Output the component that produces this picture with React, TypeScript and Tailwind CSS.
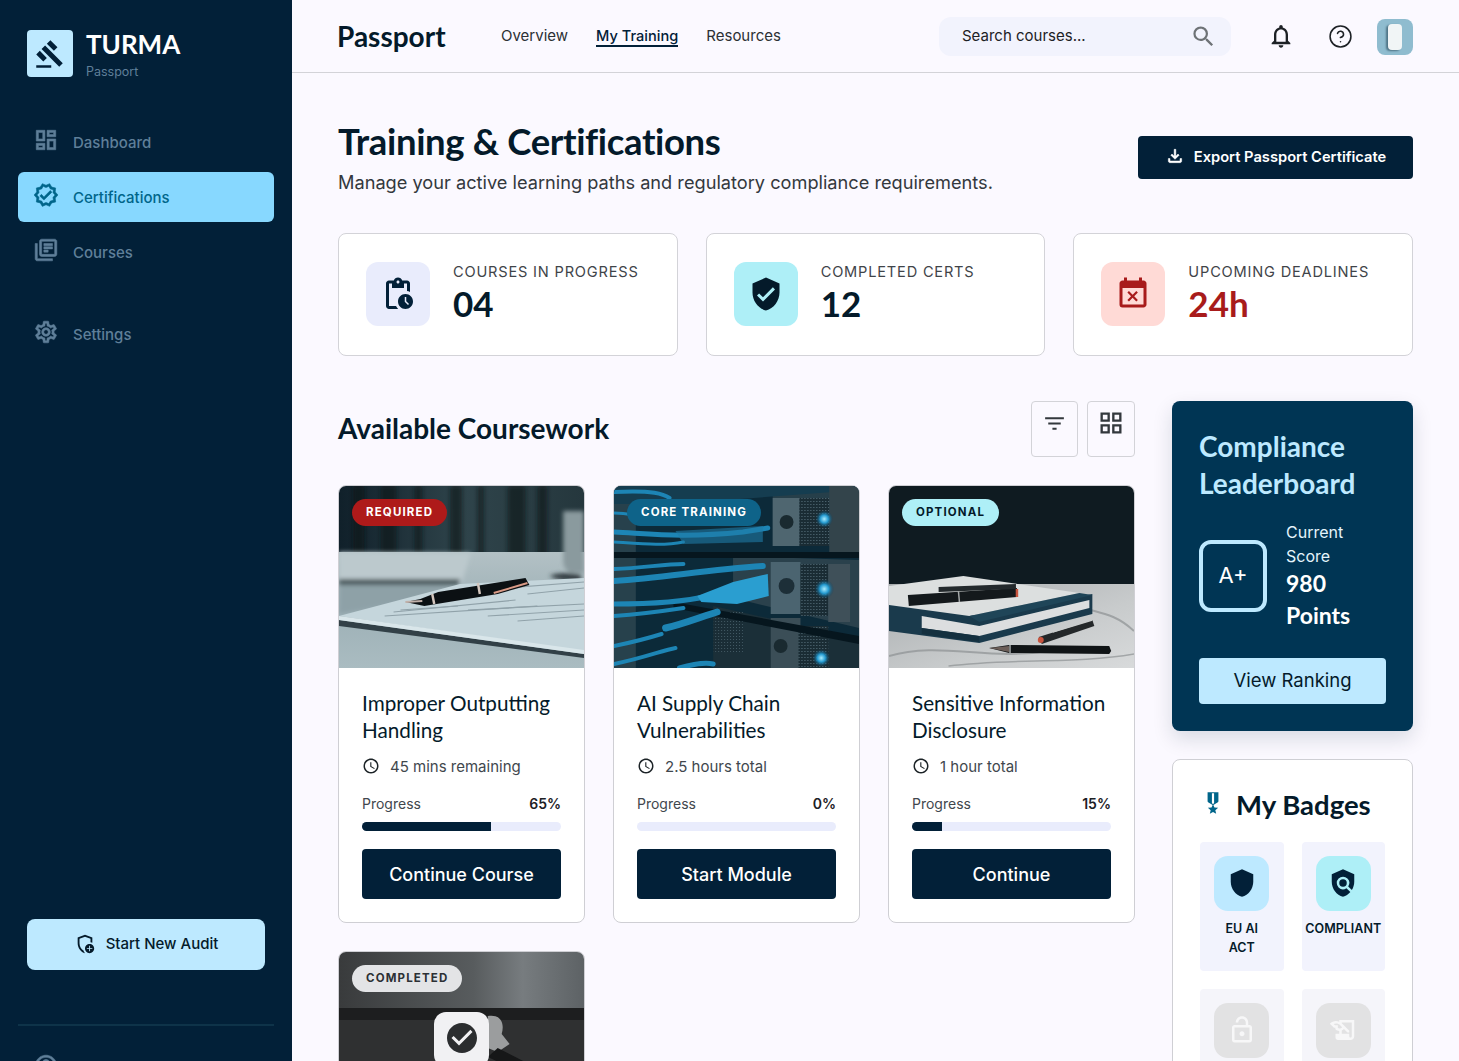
import {
  MdCheckCircle,
  MdEventBusy,
  MdFilterList,
  MdGavel,
  MdMilitaryTech,
  MdOutlineAddModerator,
  MdOutlineDashboard,
  MdOutlineFileDownload,
  MdOutlineGridView,
  MdOutlineHelpOutline,
  MdOutlineHistoryEdu,
  MdOutlineLibraryBooks,
  MdOutlineLockOpen,
  MdOutlineNotifications,
  MdOutlineSchedule,
  MdOutlineSettings,
  MdOutlineVerified,
  MdPendingActions,
  MdPolicy,
  MdSearch,
  MdShield,
  MdVerifiedUser,
} from "react-icons/md"
import { CircleHelp } from "lucide-react"
import type { ReactNode } from "react"

const heading = "font-['Lato',sans-serif]"

function PenPhoto() {
  return (
    <svg viewBox="0 0 247 182" preserveAspectRatio="none" className="block h-full w-full">
      <defs>
        <linearGradient id="deskTop" x1="0" x2="1" y1="0" y2="0">
          <stop offset="0" stopColor="#10202a" />
          <stop offset="0.5" stopColor="#2f444b" />
          <stop offset="1" stopColor="#25373d" />
        </linearGradient>
        <linearGradient id="deskBottom" x1="0" x2="0" y1="0" y2="1">
          <stop offset="0" stopColor="#b3c1c5" />
          <stop offset="0.5" stopColor="#9db0b6" />
          <stop offset="1" stopColor="#aabcc1" />
        </linearGradient>
        <filter id="soft1"><feGaussianBlur stdDeviation="2" /></filter>
      </defs>
      <rect width="247" height="70" fill="url(#deskTop)" />
      <g filter="url(#soft1)" fill="#071319" opacity="0.6">
        <rect x="14" width="12" height="70" />
        <rect x="42" width="16" height="70" />
        <rect x="76" width="8" height="70" />
        <rect x="112" width="12" height="70" />
        <rect x="140" width="6" height="70" />
        <rect x="170" width="18" height="70" />
        <rect x="200" width="10" height="70" />
      </g>
      <rect y="66" width="247" height="116" fill="url(#deskBottom)" />
      <g filter="url(#soft1)">
        <path d="M226 25 h21 v62 h-14 q-7 -4 -7 -12z" fill="#8a9a9e" />
        <path d="M0 66 L133 67 L124 96 L0 96z" fill="#bcc9cd" />
        <path d="M0 93 L122 93 L120 99 L0 99z" fill="#4a585c" />
        <path d="M0 99 L120 99 L60 118 L0 128Z" fill="#8ea1a7" />
        <path d="M212 90 q12 -5 32 -1 v5 q-20 2 -32 -4z" fill="#2e393c" />
      </g>
      <path d="M0 130 L122 98 L247 92 L247 165 Z" fill="#c5d6dc" />
      <path d="M0 134 L247 168 L247 172 L0 140 Z" fill="#324047" />
      <path d="M0 130 L247 164 L247 168 L0 134 Z" fill="#d9e6ea" />
      <g stroke="#7f9199" strokeWidth="1.2" opacity="0.75">
        <path d="M55 126 L178 114" />
        <path d="M46 130 L200 120" />
        <path d="M62 124 L120 120" />
        <path d="M130 124 L247 118" />
        <path d="M150 130 L247 124" />
        <path d="M180 135 L247 130" />
        <path d="M190 108 L247 102" />
        <path d="M170 102 L247 96" />
      </g>
      <path d="M67 116 L82 113 L100 106 L188 92 L192 99 L160 108 L86 120 Z" fill="#0b1013" />
      <path d="M140 97 L142 108 M94 108 L96 118" stroke="#d3c5bd" strokeWidth="2.5" />
      <path d="M156 107 L190 97" stroke="#d99a86" strokeWidth="2" />
      <path d="M67 116 L84 115" stroke="#c1b1aa" strokeWidth="2" />
    </svg>
  )
}

function ServerPhoto() {
  return (
    <svg viewBox="0 0 247 182" preserveAspectRatio="none" className="block h-full w-full">
      <defs>
        <radialGradient id="led">
          <stop offset="0" stopColor="#a8ecff" />
          <stop offset="0.45" stopColor="#249ad0" />
          <stop offset="1" stopColor="#0a3b55" stopOpacity="0" />
        </radialGradient>
        <pattern id="mesh" width="3" height="3" patternUnits="userSpaceOnUse">
          <rect width="3" height="3" fill="#1a2c34" />
          <rect width="1" height="1" fill="#5c7581" />
        </pattern>
      </defs>
      <rect width="247" height="182" fill="#0c2a39" />
      <rect width="22" height="182" fill="#27414c" />
      <path d="M160 0 L247 0 L247 60 L160 60Z" fill="#263f4a" />
      <path d="M120 70 L247 74 L247 142 L120 112Z" fill="#2a414c" />
      <path d="M100 120 L247 152 L247 182 L100 182Z" fill="#1b2f38" />
      <path d="M0 0 H247 V4 L60 18 H0Z" fill="#153d50" />
      <rect x="160" y="12" width="27" height="48" fill="#4f6670" />
      <rect x="187" y="12" width="30" height="48" fill="url(#mesh)" />
      <rect x="217" y="0" width="30" height="66" fill="#33444b" />
      <rect x="158" y="76" width="30" height="52" fill="#4b6470" />
      <rect x="188" y="78" width="28" height="52" fill="url(#mesh)" />
      <rect x="216" y="78" width="22" height="58" fill="#3f5059" />
      <rect x="158" y="132" width="30" height="50" fill="#3b4e57" />
      <rect x="186" y="140" width="30" height="42" fill="url(#mesh)" />
      <rect x="100" y="126" width="30" height="40" fill="url(#mesh)" opacity="0.6" />
      <path d="M0 66 H247 V72 H0Z M60 116 L247 150 V158 L60 122Z" fill="#06161e" />
      <circle cx="174" cy="36" r="7" fill="#1a2a30" />
      <circle cx="174" cy="100" r="8" fill="#1d2f38" />
      <circle cx="168" cy="160" r="7" fill="#1a2a30" />
      <g fill="none" stroke="#1d85b5" strokeLinecap="round">
        <path d="M0 6 C40 4 50 8 56 12" strokeWidth="4" />
        <path d="M0 27 C15 27 25 30 40 34" strokeWidth="3" />
        <path d="M0 46 C40 48 70 52 130 46 L155 42" strokeWidth="5" />
        <path d="M0 83 C30 82 50 78 70 78" strokeWidth="4" />
        <path d="M0 95 C50 92 90 84 150 80" strokeWidth="6" />
        <path d="M0 118 C40 118 70 116 95 110 L145 100" strokeWidth="5" />
        <path d="M0 130 C30 128 50 125 70 122" strokeWidth="4" />
        <path d="M52 142 C70 138 90 130 104 126" strokeWidth="7" />
        <path d="M0 160 C20 156 35 152 48 148" strokeWidth="4" />
        <path d="M0 178 C30 172 50 164 62 162" strokeWidth="4" />
        <path d="M66 182 C80 178 90 176 100 178" strokeWidth="5" />
        <path d="M0 56 C30 58 50 60 70 56" strokeWidth="3" />
      </g>
      <path d="M84 110 L120 96 L155 88 L156 110 L124 118 L88 116Z" fill="#2a9ed0" />
      <path d="M62 45 L150 40 V56 L70 58Z" fill="#1f7ca6" opacity="0.6" />
      <circle cx="212" cy="33" r="9" fill="url(#led)" />
      <circle cx="212" cy="103" r="10" fill="url(#led)" />
      <circle cx="209" cy="172" r="9" fill="url(#led)" />
    </svg>
  )
}

function NotebookPhoto() {
  return (
    <svg viewBox="0 0 247 182" preserveAspectRatio="none" className="block h-full w-full">
      <defs>
        <linearGradient id="marble" x1="0" x2="1" y1="0" y2="1">
          <stop offset="0" stopColor="#a9adaf" />
          <stop offset="0.6" stopColor="#c8cbcc" />
          <stop offset="1" stopColor="#d8dadb" />
        </linearGradient>
      </defs>
      <rect width="247" height="182" fill="#0f1b21" />
      <rect y="98" width="247" height="84" fill="url(#marble)" />
      <g stroke="#8e9294" fill="none" opacity="0.7">
        <path d="M0 170 C50 155 100 175 160 165" strokeWidth="2" />
        <path d="M170 110 C200 130 220 120 247 145" strokeWidth="2" />
        <path d="M60 180 C120 172 190 178 247 168" strokeWidth="1.5" />
      </g>
      <path d="M0 118 L0 145 L91 157 L205 128 L205 108 L91 130Z" fill="#1a3a4c" />
      <path d="M33 130 L91 140 L202 114 L202 122 L91 150 L33 142Z" fill="#dcdedf" />
      <path d="M33 142 L91 150 V156 L33 148Z" fill="#14303f" />
      <path d="M0 100 L75 90 L192 107 L81 130 L0 119 Z" fill="#dcdfdf" />
      <path d="M81 130 L192 107 L205 109 L91 136Z" fill="#1f4558" />
      <path d="M19 109 L129 102 L129 111 L20 120Z" fill="#14191c" />
      <path d="M50 101 L128 98 L128 103 L50 106Z" fill="#23292c" />
      <path d="M70 105 L71 116" stroke="#a5a9aa" strokeWidth="1.5" />
      <path d="M129 103 L129 111" stroke="#c9553f" strokeWidth="2.5" />
      <path d="M151 151 L205 134 L207 140 L154 158Z" fill="#24282a" />
      <path d="M165 146 L205 134" stroke="#c9cccc" strokeWidth="1.5" />
      <circle cx="153" cy="154" r="3" fill="#c9553f" />
      <path d="M101 162 L121 159 L222 160 L224 165 L222 168 L121 167Z" fill="#101416" />
      <path d="M101 162 L121 160 L121 166Z" fill="#6c5e58" />
      <path d="M122 159 V167" stroke="#a5a9aa" strokeWidth="1.5" />
    </svg>
  )
}

function GavelPhoto() {
  return (
    <svg viewBox="0 0 247 182" preserveAspectRatio="none" className="block h-full w-full">
      <defs>
        <linearGradient id="grayBack" x1="0" x2="1" y1="0" y2="0">
          <stop offset="0" stopColor="#393b3c" />
          <stop offset="0.55" stopColor="#585c5e" />
          <stop offset="0.75" stopColor="#777c7f" />
          <stop offset="1" stopColor="#5d6265" />
        </linearGradient>
      </defs>
      <rect width="247" height="182" fill="url(#grayBack)" />
      <rect y="58" width="247" height="124" fill="#2f3031" />
      <rect y="56" width="247" height="12" fill="#1d1e1f" />
      <path d="M150 64 C160 62 168 68 164 82 L172 92 L160 100 L150 96Z" fill="#9b9d9e" />
      <path d="M160 96 L247 140 V150 L150 105Z" fill="#161718" />
    </svg>
  )
}

function NavItem({ icon, label, active, className }: { icon: ReactNode; label: string; active?: boolean; className?: string }) {
  return (
    <div className={`flex h-[50px] items-center gap-[14px] rounded-md pl-[15px] text-[15px] font-medium ${active ? "bg-[#87d8ff] text-[#00658a]" : "text-[#5f7f99]"} ${className ?? ""}`}>
      <span className="-mt-1 text-[26px] [&_path:not([fill=none])]:[stroke-width:0.5]">{icon}</span>
      <span className="mt-[2px]">{label}</span>
    </div>
  )
}

function StatCard({ icon, iconBox, label, value, valueColor }: { icon: ReactNode; iconBox: string; label: string; value: string; valueColor: string }) {
  return (
    <div className="flex h-[123px] flex-1 items-center gap-[23px] rounded-lg border border-[#d3d3d8] bg-white pl-[27px]">
      <div className={`-mt-px flex h-[64px] w-[64px] items-center justify-center rounded-xl text-[36px] ${iconBox}`}>{icon}</div>
      <div className="-mt-[3px]">
        <div className="text-[14.6px] tracking-[0.055em] text-[#3f4449]">{label}</div>
        <div className={`${heading} -mt-[3px] text-[35px] leading-[44px] font-bold ${valueColor}`}>{value}</div>
      </div>
    </div>
  )
}

function CourseCard({ photo, tag, tagClass, title, time, pct, cta }: { photo: ReactNode; tag: string; tagClass: string; title: ReactNode; time: string; pct: number; cta: string }) {
  return (
    <div className="overflow-hidden rounded-lg border border-[#cfcfd4] bg-white">
      <div className="relative h-[182px]">
        {photo}
        <span className={`absolute top-[13px] left-[13px] flex h-[27px] items-center rounded-full px-[14px] text-[11.5px] font-bold tracking-[0.1em] ${tagClass}`}>{tag}</span>
      </div>
      <div className="h-[254px] px-[23px] pt-[22px]">
        <h3 className={`${heading} text-[20.7px] leading-[27px] text-[#041a2a]`}>{title}</h3>
        <div className="mt-[12px] flex items-center gap-[10px] text-[15px] text-[#41474d]">
          <MdOutlineSchedule className="-mt-1 text-[18px] text-[#1c2327]" />
          {time}
        </div>
        <div className="mt-[14px] flex justify-between text-[14px]">
          <span className="text-[#41474d]">Progress</span>
          <span className="font-semibold text-[#1d2125]">{pct}%</span>
        </div>
        <div className="mt-[8px] h-[9px] overflow-hidden rounded-full bg-[#e9ecfc]">
          <div className="h-full bg-[#022038]" style={{ width: `${pct}%` }} />
        </div>
        <button className="mt-[18px] h-[50px] w-full rounded bg-[#022038] pt-px text-[18px] font-medium text-white">{cta}</button>
      </div>
    </div>
  )
}

function BadgeTile({ icon, label, locked }: { icon: ReactNode; label?: ReactNode; locked?: boolean }) {
  return (
    <div className={`flex h-[129px] flex-col items-center rounded pt-[14px] ${locked ? "bg-[#f5f5fa]" : "bg-[#f2f3fd]"}`}>
      {icon}
      {label && <div className="mt-[8px] text-center text-[12.5px] leading-[19px] font-semibold text-[#041a2a]">{label}</div>}
    </div>
  )
}

export default function App() {
  return (
    <div className="flex h-screen overflow-hidden bg-[#fbf9ff] font-['Inter',sans-serif] text-[#041a2a]">
      <aside className="h-full w-[292px] shrink-0 overflow-hidden bg-[#022038] px-[18px] pt-[30px]">
        <div className="flex items-start gap-[13px] pl-[9px]">
          <div className="flex h-[47px] w-[46px] items-center justify-center rounded-sm bg-[#bde9ff] text-[30px] text-[#022038]">
            <MdGavel />
          </div>
          <div>
            <div className={`${heading} -mt-1 text-[26px] leading-[36px] font-bold text-white`}>TURMA</div>
            <div className="mt-px text-[12.5px] text-[#5f7f99]">Passport</div>
          </div>
        </div>
        <nav className="mt-[35px] flex flex-col gap-[5px]">
          <NavItem icon={<MdOutlineDashboard />} label="Dashboard" />
          <NavItem icon={<MdOutlineVerified />} label="Certifications" active />
          <NavItem icon={<MdOutlineLibraryBooks />} label="Courses" />
          <NavItem icon={<MdOutlineSettings />} label="Settings" className="mt-[27px]" />
        </nav>
        <button className="mx-[9px] mt-[560px] flex h-[51px] w-[238px] items-center justify-center gap-[10px] rounded-lg bg-[#bde9ff] text-[15px] font-medium text-[#041a2a]">
          <MdOutlineAddModerator className="text-[22px]" />
          Start New Audit
        </button>
        <div className="mt-[54px] border-t-2 border-[#0e3349] pt-[17px]">
          <NavItem icon={<MdOutlineHelpOutline />} label="Help Center" className="h-[30px]" />
        </div>
      </aside>

      <div className="min-w-0 flex-1 overflow-hidden">
        <header className="flex h-[73px] items-center border-b border-[#d3d3d8] px-[46px]">
          <div className={`${heading} -ml-px w-[164px] text-[28px] font-bold text-[#041a2a]`}>Passport</div>
          <nav className="mt-[2px] flex items-center gap-[28px] text-[15px] leading-[18px] text-[#2c3034]">
            <span className="border-b-2 border-transparent">Overview</span>
            <span className="border-b-2 border-[#022038] text-[14.6px] font-medium text-[#022038]">My Training</span>
            <span className="border-b-2 border-transparent">Resources</span>
          </nav>
          <div className="ml-auto flex h-[39px] w-[292px] items-center justify-between rounded-xl bg-[#f2f3fd] pr-[14px] pl-[23px] text-[15px] text-[#1d2125]">
            Search courses...
            <MdSearch className="text-[27px] text-[#6e7276]" />
          </div>
          <MdOutlineNotifications className="ml-[36px] text-[28px] text-[#1d2125]" />
          <CircleHelp size={25} strokeWidth={1.5} className="ml-[33px] text-[#1d2125]" />
          <div className="mt-px ml-[24px] flex h-[36px] w-[36px] items-center justify-center rounded-lg bg-[#8fbccf]">
            <div className="h-[26px] w-[14px] rounded-sm bg-[#f1f5f6] shadow-[-2px_1px_2px_#4f7486]" />
          </div>
        </header>

        <main className="px-[46px] pt-[47px]">
          <div className="flex items-start justify-between">
            <div>
              <h1 className={`${heading} text-[36.5px] leading-[42px] font-bold tracking-[-0.01em] text-[#041a2a]`}>Training &amp; Certifications</h1>
              <p className="mt-[7px] text-[18.2px] text-[#33383d]">Manage your active learning paths and regulatory compliance requirements.</p>
            </div>
            <button className="mt-[16px] flex h-[43px] w-[275px] items-center justify-center gap-[9px] rounded bg-[#022038] text-[14.7px] font-semibold text-white">
              <MdOutlineFileDownload className="-mt-1 text-[20px] [&_path:not([fill=none])]:[stroke-width:0.6]" />
              Export Passport Certificate
            </button>
          </div>

          <div className="mt-[37px] flex gap-[28px]">
            <StatCard icon={<MdPendingActions />} iconBox="bg-[#e9ecfc] text-[#022038]" label="COURSES IN PROGRESS" value="04" valueColor="text-[#041a2a]" />
            <StatCard icon={<MdVerifiedUser />} iconBox="bg-[#aeeff7] text-[#041a2a]" label="COMPLETED CERTS" value="12" valueColor="text-[#041a2a]" />
            <StatCard icon={<MdEventBusy />} iconBox="bg-[#ffdad6] text-[#a81b1b]" label="UPCOMING DEADLINES" value="24h" valueColor="text-[#a81b1b]" />
          </div>

          <div className="mt-[45px] flex items-start gap-[37px]">
            <section className="w-[797px] shrink-0">
              <div className="flex h-[56px] items-center justify-between">
                <h2 className={`${heading} -mt-[2px] text-[28px] font-bold text-[#041a2a]`}>Available Coursework</h2>
                <div className="flex gap-[9px]">
                  <button className="flex h-[56px] w-[47px] justify-center rounded border border-[#d3d3d8] pt-[9px] text-[25px] text-[#33383d]"><MdFilterList /></button>
                  <button className="flex h-[56px] w-[48px] justify-center rounded border border-[#d3d3d8] pt-[7px] text-[28px] text-[#33383d]"><MdOutlineGridView /></button>
                </div>
              </div>
              <div className="mt-[28px] grid grid-cols-3 gap-[28px]">
                <CourseCard photo={<PenPhoto />} tag="REQUIRED" tagClass="bg-[#ae1a1a] text-white" title={<>Improper Outputting<br />Handling</>} time="45 mins remaining" pct={65} cta="Continue Course" />
                <CourseCard photo={<ServerPhoto />} tag="CORE TRAINING" tagClass="bg-[#0e6389] text-white" title={<>AI Supply Chain<br />Vulnerabilities</>} time="2.5 hours total" pct={0} cta="Start Module" />
                <CourseCard photo={<NotebookPhoto />} tag="OPTIONAL" tagClass="bg-[#aeeff7] text-[#041a2a]" title={<>Sensitive Information<br />Disclosure</>} time="1 hour total" pct={15} cta="Continue" />
                <div className="h-[300px] overflow-hidden rounded-lg border border-[#cfcfd4] bg-white">
                  <div className="relative h-[182px]">
                    <GavelPhoto />
                    <span className="absolute top-[13px] left-[13px] flex h-[27px] items-center rounded-full bg-[#e3e4e6] px-[14px] text-[11.5px] font-bold tracking-[0.1em] text-[#2c3034]">COMPLETED</span>
                    <div className="absolute top-[60px] left-[95px] flex h-[55px] w-[55px] justify-center rounded-xl bg-[#f1f1f3] pt-[8px] text-[36px] text-[#2b2d2f]">
                      <MdCheckCircle />
                    </div>
                  </div>
                </div>
              </div>
            </section>

            <aside className="flex w-[241px] shrink-0 flex-col gap-[28px]">
              <div className="h-[330px] rounded-lg bg-[#003554] px-[27px] pt-[27px] shadow-[0_8px_20px_rgba(2,32,56,0.14)]">
                <h2 className={`${heading} text-[28px] leading-[37px] font-bold text-[#bde9ff]`}>Compliance Leaderboard</h2>
                <div className="mt-[18px] flex items-center gap-[19px]">
                  <div className="flex h-[72px] w-[68px] items-center justify-center rounded-xl border-4 border-[#bde9ff] text-[22px] text-white">A+</div>
                  <div className="text-white">
                    <div className="text-[16px] leading-[24px] text-[#e4f4fc]">Current<br />Score</div>
                    <div className={`${heading} -mt-px text-[23px] leading-[32px] font-bold`}>980<br />Points</div>
                  </div>
                </div>
                <button className="mt-[27px] h-[46px] w-full rounded bg-[#bde9ff] text-[18.5px] text-[#041a2a]">View Ranking</button>
              </div>

              <div className="rounded-lg border border-[#cfcfd4] bg-white px-[27px] pt-[24px] pb-[30px]">
                <div className="flex items-center gap-[10px] pl-[3px]">
                  <MdMilitaryTech className="-mt-1 -ml-[3px] text-[26px] text-[#00658a]" />
                  <h2 className={`${heading} text-[27.5px] font-bold text-[#041a2a]`}>My Badges</h2>
                </div>
                <div className="mt-[16px] grid grid-cols-2 gap-[18px]">
                  <BadgeTile icon={<div className="flex h-[55px] w-[55px] items-center justify-center rounded-[14px] bg-[#bde9ff] text-[30px] text-[#022038]"><MdShield /></div>} label={<>EU AI<br />ACT</>} />
                  <BadgeTile icon={<div className="flex h-[55px] w-[55px] items-center justify-center rounded-[14px] bg-[#aeeff7] text-[30px] text-[#022038]"><MdPolicy /></div>} label="COMPLIANT" />
                  <BadgeTile locked icon={<div className="flex h-[55px] w-[55px] items-center justify-center rounded-[14px] bg-[#e2e2e3] text-[30px] text-[#f7f7f8]"><MdOutlineLockOpen /></div>} />
                  <BadgeTile locked icon={<div className="flex h-[55px] w-[55px] items-center justify-center rounded-[14px] bg-[#e2e2e3] text-[30px] text-[#f7f7f8]"><MdOutlineHistoryEdu /></div>} />
                </div>
              </div>
            </aside>
          </div>
        </main>
      </div>
    </div>
  )
}
